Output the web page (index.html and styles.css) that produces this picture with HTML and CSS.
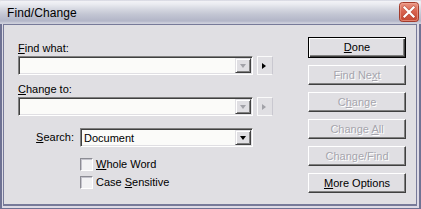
FILE: index.html
```html
<!DOCTYPE html>
<html>
<head>
<meta charset="utf-8">
<title>Find/Change</title>
<link rel="stylesheet" href="styles.css">
</head>
<body>
<div class="window">
  <div class="titlebar">
    <span class="title">Find/Change</span>
    <span class="close">
      <svg width="20" height="20" viewBox="0 0 20 20">
        <defs>
          <linearGradient id="rg" x1="0" y1="0" x2="0" y2="1">
            <stop offset="0" stop-color="#ec9a88"/>
            <stop offset="0.45" stop-color="#d96450"/>
            <stop offset="1" stop-color="#c4452f"/>
          </linearGradient>
        </defs>
        <rect x="0.5" y="0.5" width="19" height="19" rx="3" fill="url(#rg)" stroke="#a33b2b"/>
        <rect x="1.5" y="1.5" width="17" height="17" rx="2" fill="none" stroke="#f0a898" stroke-opacity="0.6"/>
        <path d="M5.5 5.5 L14.5 14.5 M14.5 5.5 L5.5 14.5" stroke="#8a2a1c" stroke-width="3.4" stroke-linecap="square" stroke-opacity="0.35"/>
        <path d="M5.5 5.5 L14.5 14.5 M14.5 5.5 L5.5 14.5" stroke="#ffffff" stroke-width="2.2" stroke-linecap="square"/>
      </svg>
    </span>
  </div>
  <div class="frame">
    <div class="client">
      <div class="fields">
        <div class="label"><u>F</u>ind what:</div>
        <div class="combo-row">
          <div class="combo"><span class="drop"><i class="tri-down dim"></i></span></div>
          <div class="arrow-btn"><i class="tri-right"></i></div>
        </div>
        <div class="label second"><u>C</u>hange to:</div>
        <div class="combo-row">
          <div class="combo"><span class="drop"><i class="tri-down dim"></i></span></div>
          <div class="arrow-btn"><i class="tri-right dim"></i></div>
        </div>
        <div class="options">
          <div class="opt-label"><u>S</u>earch:</div>
          <div class="select"><span class="value">Document</span><span class="drop"><i class="tri-down"></i></span></div>
          <div class="check-row"><span class="box"></span><span><u>W</u>hole Word</span></div>
          <div class="check-row"><span class="box"></span><span>Case <u>S</u>ensitive</span></div>
        </div>
      </div>
      <div class="buttons">
        <div class="btn default"><span><u>D</u>one</span></div>
        <div class="btn disabled"><span>Find Ne<u>x</u>t</span></div>
        <div class="btn disabled"><span>C<u>h</u>ange</span></div>
        <div class="btn disabled"><span>Change <u>A</u>ll</span></div>
        <div class="btn disabled"><span>Chan<u>g</u>e/Find</span></div>
        <div class="btn"><span><u>M</u>ore Options</span></div>
      </div>
    </div>
  </div>
</div>
</body>
</html>
```

FILE: styles.css
```css
html, body {
  margin: 0;
  padding: 0;
  background: #e0dfe3;
}
body {
  font-family: "Liberation Sans", Arial, sans-serif;
  font-size: 11px;
  line-height: 13px;
  color: #000;
}
u {
  text-decoration: underline;
  text-underline-offset: 1px;
}
.window {
  width: 421px;
  height: 209px;
  display: flex;
  flex-direction: column;
}
.titlebar {
  height: 24px;
  flex: none;
  box-sizing: border-box;
  display: flex;
  align-items: center;
  justify-content: space-between;
  padding: 0 2px 0 7px;
  background: linear-gradient(to bottom,
    #c4c5d3 0px, #f2f2f6 1px, #ebecf1 4px, #d6d8e1 9px,
    #c4c7d4 14px, #b7bacb 19px, #b3b6c8 21px, #cdcfdb 23px, #cdcfdb 24px);
  border-radius: 3px 3px 0 0;
}
.title {
  font-size: 12px;
  letter-spacing: 0.1px;
  color: #000;
  padding-top: 2px;
}
.close {
  display: flex;
  width: 20px;
  height: 20px;
}
.frame {
  flex: 1;
  display: flex;
  border: solid #6f7293;
  border-width: 0 2px 1px 2px;
  padding: 0 2px 2px 1px;
  background: #dcdae5;
}
.client {
  flex: 1;
  display: flex;
  gap: 35px;
  border: 1px solid #777a99;
  border-bottom-width: 2px;
  background: #e0dfe3;
  padding: 0 0 0 14px;
}
.fields {
  width: 255px;
  padding-top: 17px;
  display: flex;
  flex-direction: column;
}
.label {
  height: 13px;
  margin-bottom: 1px;
}
.label.second {
  margin-top: 8px;
}
.combo-row {
  display: flex;
  gap: 4px;
  height: 19px;
}
.combo, .select {
  box-sizing: border-box;
  height: 19px;
  border: 1px solid;
  border-color: #808080 #ffffff #ffffff #808080;
  box-shadow: inset 1px 1px #404040, inset -1px -1px #e0dfe3;
  background: #fbfbf9;
  display: flex;
  justify-content: flex-end;
  align-items: center;
  padding: 1px 1px;
}
.combo {
  width: 235px;
}
.drop {
  box-sizing: border-box;
  width: 16px;
  height: 15px;
  background: #e0dfe3;
  border: 1px solid;
  border-color: #e0dfe3 #404040 #404040 #e0dfe3;
  box-shadow: inset 1px 1px #ffffff, inset -1px -1px #808080;
  display: flex;
  align-items: center;
  justify-content: center;
}
.tri-down {
  width: 0;
  height: 0;
  border-top: 4px solid #000;
  border-left: 3.5px solid transparent;
  border-right: 3.5px solid transparent;
}
.tri-down.dim {
  border-top-color: #a2a2a8;
}
.arrow-btn {
  box-sizing: border-box;
  width: 16px;
  height: 19px;
  border: 1px solid;
  border-color: #fafafa #c9c8d0 #fafafa #fafafa;
  display: flex;
  align-items: center;
  padding-left: 4px;
}
.tri-right {
  width: 0;
  height: 0;
  border-left: 4px solid #000;
  border-top: 3.5px solid transparent;
  border-bottom: 3.5px solid transparent;
}
.tri-right.dim {
  border-left-color: #a2a2a8;
}
.options {
  margin-top: 12px;
  display: grid;
  grid-template-columns: 62px 173px;
  row-gap: 5px;
}
.opt-label {
  height: 19px;
  display: flex;
  align-items: center;
  justify-content: flex-end;
  padding-right: 6px;
}
.select {
  grid-column: 2;
  justify-content: space-between;
  padding-left: 3px;
}
.select .value {
  line-height: 13px;
  padding-top: 1px;
}
.check-row {
  grid-column: 2;
  display: flex;
  align-items: center;
  gap: 3px;
  height: 13px;
}
.options .check-row:nth-child(3) {
  margin-top: 6px;
}
.box {
  box-sizing: border-box;
  width: 13px;
  height: 13px;
  border: 1px solid;
  border-color: #8c8c94 #ffffff #ffffff #8c8c94;
  box-shadow: inset 1px 1px #c4c3cc;
  background: #f2f2f4;
}
.buttons {
  width: 98px;
  padding-top: 12px;
  display: flex;
  flex-direction: column;
  gap: 7px;
}
.btn {
  box-sizing: border-box;
  height: 20px;
  border: 1px solid;
  border-color: #ffffff #404040 #404040 #ffffff;
  box-shadow: inset -1px -1px #808080;
  background: #e0dfe3;
  display: flex;
  align-items: center;
  justify-content: center;
}
.btn.default {
  height: 21px;
  border: 1px solid #000;
  box-shadow: inset 1px 1px #ffffff, inset -1px -1px #404040, inset -2px -2px #808080;
}
.btn.disabled {
  color: #a6a5ad;
  text-shadow: 1px 1px #ffffff;
}
```
